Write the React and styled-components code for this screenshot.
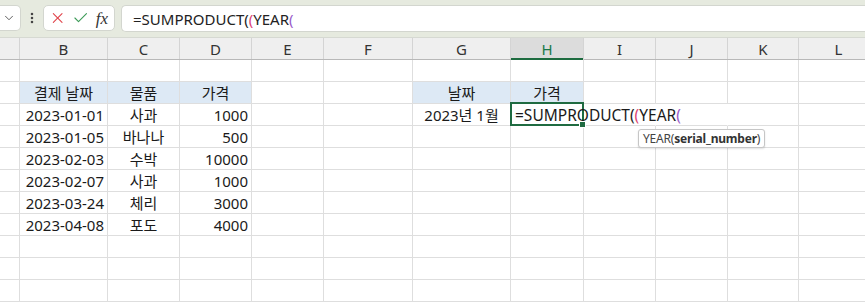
import React from "react";
import styled, { createGlobalStyle } from "styled-components";
import { ChevronDown, EllipsisVertical, X, Check } from "lucide-react";

const GlobalStyle = createGlobalStyle`
	html, body {
		margin: 0;
		padding: 0;
		background: #ffffff;
		overflow: hidden;
	}
	body {
		font-family: "Noto Sans", "Noto Sans CJK KR", sans-serif;
	}
`;

const COLS = [
	{ key: "A", width: 20 },
	{ key: "B", width: 88 },
	{ key: "C", width: 72 },
	{ key: "D", width: 72 },
	{ key: "E", width: 72 },
	{ key: "F", width: 89 },
	{ key: "G", width: 98 },
	{ key: "H", width: 73 },
	{ key: "I", width: 72 },
	{ key: "J", width: 72 },
	{ key: "K", width: 71 },
	{ key: "L", width: 80 },
];

const TEMPLATE = COLS.map( ( c ) => c.width + "px" ).join( " " );

const Window = styled.div`
	width: 865px;
	height: 302px;
	overflow: hidden;
	position: relative;
	background: #ffffff;
`;

const Toolbar = styled.div`
	height: 38px;
	background: #e6eadf;
	display: flex;
	align-items: flex-start;
	padding-top: 5px;
	box-sizing: border-box;
	border-bottom: 1px solid #d6d9d2;
`;

const NameBox = styled.div`
	width: 23px;
	height: 26px;
	margin-left: -2px;
	background: #ffffff;
	border: 1px solid #d3d6cf;
	border-left: none;
	border-radius: 0 5px 5px 0;
	box-sizing: border-box;
	display: flex;
	align-items: center;
	justify-content: center;
	color: #555555;
`;

const Grip = styled.div`
	width: 22px;
	height: 26px;
	display: flex;
	align-items: center;
	justify-content: center;
	color: #444444;
`;

const ActionBox = styled.div`
	width: 72px;
	height: 26px;
	background: #ffffff;
	border: 1px solid #d3d6cf;
	border-radius: 5px;
	box-sizing: border-box;
	display: flex;
	align-items: center;
	padding: 0 6px 0 5px;
	gap: 6px;
`;

const Fx = styled.span`
	font-family: "Liberation Serif", "DejaVu Serif", serif;
	font-style: italic;
	font-size: 17px;
	color: #333333;
	margin-left: auto;
	line-height: 1;
`;

const FormulaInput = styled.div`
	flex: 1;
	height: 27px;
	margin-left: 6px;
	background: #ffffff;
	border: 1px solid #d3d6cf;
	border-right: none;
	border-radius: 5px 0 0 5px;
	box-sizing: border-box;
	display: flex;
	align-items: center;
	padding-left: 11px;
	font-size: 15px;
	color: #222222;
	white-space: nowrap;
`;

const HeaderRow = styled.div`
	display: grid;
	grid-template-columns: ${ TEMPLATE };
	height: 22px;
	background: #efefef;
	border-bottom: 1px solid #b8b8b8;
	box-sizing: border-box;
`;

const ColHead = styled.div`
	display: flex;
	align-items: center;
	justify-content: center;
	font-size: 15px;
	color: ${ ( p ) => ( p.$active ? "#18794a" : "#333333" ) };
	background: ${ ( p ) => ( p.$active ? "#dcdcdc" : "transparent" ) };
	border-right: 1px solid #d4d4d4;
	box-shadow: ${ ( p ) => ( p.$active ? "inset 0 -2px 0 #1d6b3f" : "none" ) };
	margin-bottom: ${ ( p ) => ( p.$active ? "-1px" : "0" ) };
	box-sizing: border-box;
`;

const Row = styled.div`
	display: grid;
	grid-template-columns: ${ TEMPLATE };
	height: 22px;
`;

const Cell = styled.div`
	position: relative;
	box-sizing: border-box;
	border-right: ${ ( p ) => ( p.$open ? "1px solid transparent" : "1px solid #dedede" ) };
	border-bottom: 1px solid #dedede;
	background: ${ ( p ) => ( p.$fill ? "#dde9f5" : "transparent" ) };
	display: flex;
	align-items: center;
	justify-content: ${ ( p ) => p.$align || "flex-start" };
	padding: 0 3px;
	font-size: 15px;
	color: #1a1a1a;
	white-space: nowrap;
	overflow: visible;
`;

const Selected = styled.div`
	position: absolute;
	left: -1px;
	top: -2px;
	right: -1px;
	bottom: -1px;
	border: 2px solid #1f6b41;
	pointer-events: none;
	z-index: 2;
`;

const Handle = styled.div`
	position: absolute;
	right: -4px;
	bottom: -4px;
	width: 5px;
	height: 5px;
	background: #1f6b41;
	border: 1px solid #ffffff;
`;

const Overflow = styled.span`
	position: absolute;
	left: 4px;
	top: 50%;
	transform: translateY(-50%);
	z-index: 3;
	font-size: 15.5px;
`;

const Paren = styled.span`
	color: ${ ( p ) => p.$color };
`;

const Tooltip = styled.div`
	position: absolute;
	left: 638px;
	top: 129px;
	height: 19px;
	padding: 0 4px 0 4px;
	box-sizing: border-box;
	background: #ffffff;
	border: 1px solid #c6c6c6;
	border-radius: 3px;
	box-shadow: 0 1px 2px rgba(0, 0, 0, 0.12);
	display: flex;
	align-items: center;
	font-size: 12px;
	letter-spacing: -0.2px;
	color: #444444;
	z-index: 5;
	b {
		font-weight: 700;
		color: #333333;
	}
`;

const Formula = () => (
	<>
		=SUMPRODUCT(<Paren $color="#dc4474">(</Paren>YEAR<Paren $color="#9a5bc9">(</Paren>
	</>
);

// sparse sheet: row index -> { col: [text, align, fill] }
const SHEET = {
	1: {
		B: [ "결제 날짜", "center", true ],
		C: [ "물품", "center", true ],
		D: [ "가격", "center", true ],
		G: [ "날짜", "center", true ],
		H: [ "가격", "center", true ],
	},
	2: {
		B: [ "2023-01-01", "flex-end" ],
		C: [ "사과", "center" ],
		D: [ "1000", "flex-end" ],
		G: [ "2023년 1월", "center" ],
	},
	3: { B: [ "2023-01-05", "flex-end" ], C: [ "바나나", "center" ], D: [ "500", "flex-end" ] },
	4: { B: [ "2023-02-03", "flex-end" ], C: [ "수박", "center" ], D: [ "10000", "flex-end" ] },
	5: { B: [ "2023-02-07", "flex-end" ], C: [ "사과", "center" ], D: [ "1000", "flex-end" ] },
	6: { B: [ "2023-03-24", "flex-end" ], C: [ "체리", "center" ], D: [ "3000", "flex-end" ] },
	7: { B: [ "2023-04-08", "flex-end" ], C: [ "포도", "center" ], D: [ "4000", "flex-end" ] },
};

const ROW_COUNT = 11;

export default function App() {
	return (
		<Window>
			<GlobalStyle />
			<Toolbar>
				<NameBox>
					<ChevronDown size={ 14 } strokeWidth={ 1.6 } />
				</NameBox>
				<Grip>
					<EllipsisVertical size={ 14 } strokeWidth={ 2.4 } />
				</Grip>
				<ActionBox>
					<X size={ 18 } strokeWidth={ 1.5 } color="#e0434a" />
					<Check size={ 18 } strokeWidth={ 1.5 } color="#3c9b57" />
					<Fx>fx</Fx>
				</ActionBox>
				<FormulaInput>
					<Formula />
				</FormulaInput>
			</Toolbar>
			<HeaderRow>
				{ COLS.map( ( c ) => (
					<ColHead key={ c.key } $active={ c.key === "H" }>
						{ c.key === "A" ? "" : c.key }
					</ColHead>
				) ) }
			</HeaderRow>
			{ Array.from( { length: ROW_COUNT } ).map( ( _, r ) => (
				<Row key={ r }>
					{ COLS.map( ( c ) => {
						const data = SHEET[ r ] && SHEET[ r ][ c.key ];
						const isActive = r === 2 && c.key === "H";
						const open = r === 2 && [ "H", "I", "J" ].includes( c.key );
						return (
							<Cell
								key={ c.key }
								$align={ data ? data[ 1 ] : null }
								$fill={ data && data[ 2 ] }
								$open={ open }
							>
								{ data ? data[ 0 ] : null }
								{ isActive && (
									<>
										<Overflow><Formula /></Overflow>
										<Selected><Handle /></Selected>
									</>
								) }
							</Cell>
						);
					} ) }
				</Row>
			) ) }
			<Tooltip>
				YEAR(<b>serial_number</b>)
			</Tooltip>
		</Window>
	);
}
